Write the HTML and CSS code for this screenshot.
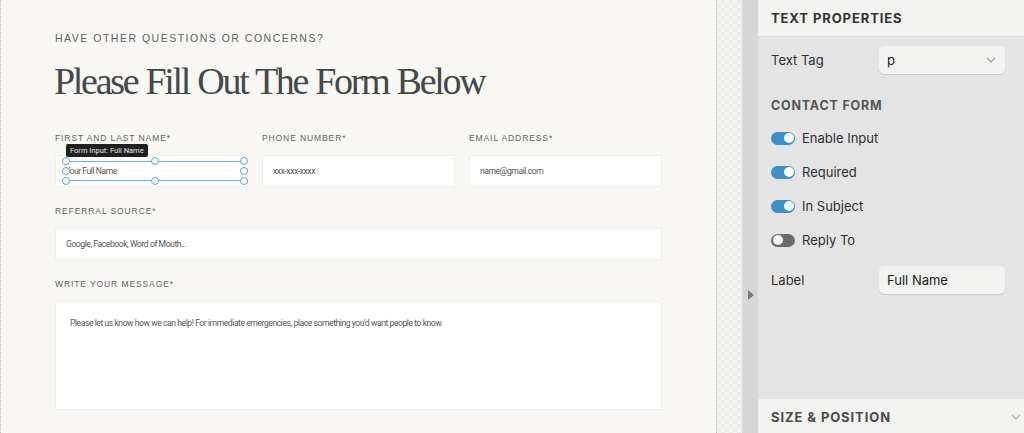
FILE: index.html
```html
<!DOCTYPE html>
<html>
<head>
  <meta charset="UTF-8">
  <title>Contact Form Editor</title>
  <link rel="stylesheet" href="styles.css">
</head>
<body>
  <div class="app">
    <!-- Canvas -->
    <div class="canvas">
      <p class="eyebrow">HAVE OTHER QUESTIONS OR CONCERNS?</p>
      <h1 class="title">Please Fill Out The Form Below</h1>

      <div class="form">
        <div class="field">
          <label>FIRST AND LAST NAME*</label>
          <div class="input selected">
            <span class="ph">Your Full Name</span>
            <div class="tip">Form Input: Full Name</div>
            <div class="sel">
              <i class="h tl"></i><i class="h tc"></i><i class="h tr"></i>
              <i class="h ml"></i><i class="h mr"></i>
              <i class="h bl"></i><i class="h bc"></i><i class="h br"></i>
            </div>
          </div>
        </div>
        <div class="field">
          <label>PHONE NUMBER*</label>
          <div class="input"><span class="ph">xxx-xxx-xxxx</span></div>
        </div>
        <div class="field">
          <label>EMAIL ADDRESS*</label>
          <div class="input"><span class="ph">name@gmail.com</span></div>
        </div>
        <div class="field wide">
          <label>REFERRAL SOURCE*</label>
          <div class="input"><span class="ph">Google, Facebook, Word of Mouth...</span></div>
        </div>
        <div class="field wide">
          <label>WRITE YOUR MESSAGE*</label>
          <div class="input area"><span class="ph">Please let us know how we can help! For immediate emergencies, place something you'd want people to know.</span></div>
        </div>
      </div>
    </div>

    <div class="gutter"></div>
    <div class="strip"><span class="arrow"></span></div>

    <!-- Properties panel -->
    <div class="panel">
      <div class="panel-head">TEXT PROPERTIES</div>
      <div class="panel-body">
        <div class="prop">
          <span>Text Tag</span>
          <div class="box select">p
            <svg width="10" height="6" viewBox="0 0 10 6"><path d="M1 1l4 4 4-4" fill="none" stroke="#999" stroke-width="1.2"/></svg>
          </div>
        </div>
        <div class="section-title">CONTACT FORM</div>
        <div class="toggle-row"><span class="toggle on"></span>Enable Input</div>
        <div class="toggle-row"><span class="toggle on"></span>Required</div>
        <div class="toggle-row"><span class="toggle on"></span>In Subject</div>
        <div class="toggle-row"><span class="toggle"></span>Reply To</div>
        <div class="prop label-prop">
          <span>Label</span>
          <div class="box">Full Name</div>
        </div>
      </div>
      <div class="panel-foot">
        SIZE &amp; POSITION
        <svg width="10" height="6" viewBox="0 0 10 6"><path d="M1 1l4 4 4-4" fill="none" stroke="#aaa" stroke-width="1.2"/></svg>
      </div>
    </div>
  </div>
</body>
</html>
```

FILE: styles.css
```css
* {
  box-sizing: border-box;
}
body {
  margin: 0;
  padding: 0;
  font-family: "Liberation Sans", Arial, sans-serif;
  background: #f8f7f4;
  overflow: hidden;
}
.app {
  display: flex;
  width: 1024px;
  height: 433px;
}
.canvas {
  width: 717px;
  height: 433px;
  background: #f8f7f4;
  border-left: 1px dotted #b9b9b9;
  border-right: 1px dotted #b9b9b9;
  padding: 31px 0 0 54px;
}
.eyebrow {
  margin: 0;
  font-size: 10.5px;
  line-height: 14px;
  letter-spacing: 1.5px;
  color: #5b6361;
}
.title {
  margin: 14px 0 0 -1px;
  font-family: "Liberation Serif", "Times New Roman", serif;
  font-weight: normal;
  font-size: 38px;
  line-height: 44px;
  letter-spacing: -2.3px;
  word-spacing: 1px;
  color: #45484a;
}
.form {
  display: grid;
  grid-template-columns: repeat(3, 193px);
  column-gap: 14px;
  row-gap: 18px;
  margin-top: 29px;
}
.field.wide {
  grid-column: 1 / 4;
}
.field label {
  display: block;
  font-size: 8.5px;
  line-height: 12px;
  letter-spacing: 0.9px;
  color: #5b6361;
  margin-bottom: 11px;
}
.input {
  position: relative;
  height: 32px;
  background: #fff;
  border: 1px solid #efeeea;
  display: flex;
  align-items: center;
  padding-left: 10px;
}
.input.area {
  height: 109px;
  align-items: flex-start;
  padding: 16px 0 0 14px;
}
.ph {
  font-family: Roboto, sans-serif;
  font-size: 8.6px;
  letter-spacing: -0.45px;
  color: #555;
}
.selected .ph {
  margin-left: -1px;
}

/* selection overlay */
.tip {
  position: absolute;
  left: 10px;
  top: -12px;
  padding: 0 4px;
  height: 13px;
  line-height: 13px;
  background: #1f1f1f;
  color: #e8e8e8;
  font-family: Roboto, sans-serif;
  font-size: 7.5px;
  border-radius: 2px;
}
.sel {
  position: absolute;
  left: 10px;
  top: 5px;
  width: 178px;
  height: 20px;
  border: 1.5px solid #6aaed8;
  border-left: none;
  border-right: none;
}
.h {
  position: absolute;
  width: 8px;
  height: 8px;
  border: 1.5px solid #5aa4d4;
  border-radius: 50%;
  background: #fff;
}
.tl { left: -4px; top: -5px; }
.tc { left: 85px; top: -5px; }
.tr { right: -4px; top: -5px; }
.ml { left: -4px; top: 5px; }
.mr { right: -4px; top: 5px; }
.bl { left: -4px; bottom: -5px; }
.bc { left: 85px; bottom: -5px; }
.br { right: -4px; bottom: -5px; }

/* gutter */
.gutter {
  width: 25px;
  height: 433px;
  background-color: #f3f3f2;
  background-image:
    linear-gradient(45deg, #ebebea 25%, transparent 25%, transparent 75%, #ebebea 75%),
    linear-gradient(45deg, #ebebea 25%, transparent 25%, transparent 75%, #ebebea 75%);
  background-size: 8px 8px;
  background-position: 0 0, 4px 4px;
}
.strip {
  width: 16px;
  height: 433px;
  background: #d6d6d6;
  padding-top: 290px;
  padding-left: 6px;
}
.arrow {
  display: block;
  width: 0;
  height: 0;
  border-top: 5px solid transparent;
  border-bottom: 5px solid transparent;
  border-left: 6px solid #7a7a7a;
}

/* panel */
.panel {
  width: 266px;
  height: 433px;
  background: #e4e4e4;
  display: flex;
  flex-direction: column;
  font-family: Inter, "Noto Sans", sans-serif;
  color: #2e2e2e;
}
.panel-head,
.panel-foot {
  height: 37px;
  background: #f2f2f1;
  display: flex;
  align-items: center;
  padding-left: 13px;
  font-size: 13px;
  font-weight: 700;
  letter-spacing: 0.9px;
  color: #333;
}
.panel-head {
  border-bottom: 1px solid #dcdcdc;
}
.panel-foot {
  height: 34px;
  margin-top: auto;
  justify-content: space-between;
  padding-right: 3px;
  padding-top: 2px;
  color: #4a4a4a;
}
.panel-body {
  padding: 9px 19px 0 13px;
}
.prop {
  display: flex;
  align-items: center;
  justify-content: space-between;
  font-size: 13px;
  height: 28px;
}
.box {
  width: 126px;
  height: 28px;
  background: #f2f2f1;
  border-radius: 5px;
  box-shadow: 0 1px 1px rgba(0, 0, 0, 0.12);
  display: flex;
  align-items: center;
  padding-left: 8px;
  font-size: 13px;
  color: #222;
}
.select {
  justify-content: space-between;
  padding-right: 9px;
}
.section-title {
  margin-top: 25px;
  font-size: 12.5px;
  font-weight: 700;
  letter-spacing: 0.8px;
  color: #555;
  line-height: 14px;
}
.toggle-row {
  display: flex;
  align-items: center;
  height: 34px;
  font-size: 13px;
}
.section-title + .toggle-row {
  margin-top: 8px;
}
.toggle {
  position: relative;
  width: 24px;
  height: 13px;
  border-radius: 7px;
  background: #6b6b6b;
  margin-right: 7px;
}
.toggle::after {
  content: "";
  position: absolute;
  top: 1.5px;
  left: 1.5px;
  width: 10px;
  height: 10px;
  border-radius: 50%;
  background: #fafafa;
}
.toggle.on {
  background: #3f8ec4;
}
.toggle.on::after {
  left: 12.5px;
}
.label-prop {
  margin-top: 9px;
}
```
